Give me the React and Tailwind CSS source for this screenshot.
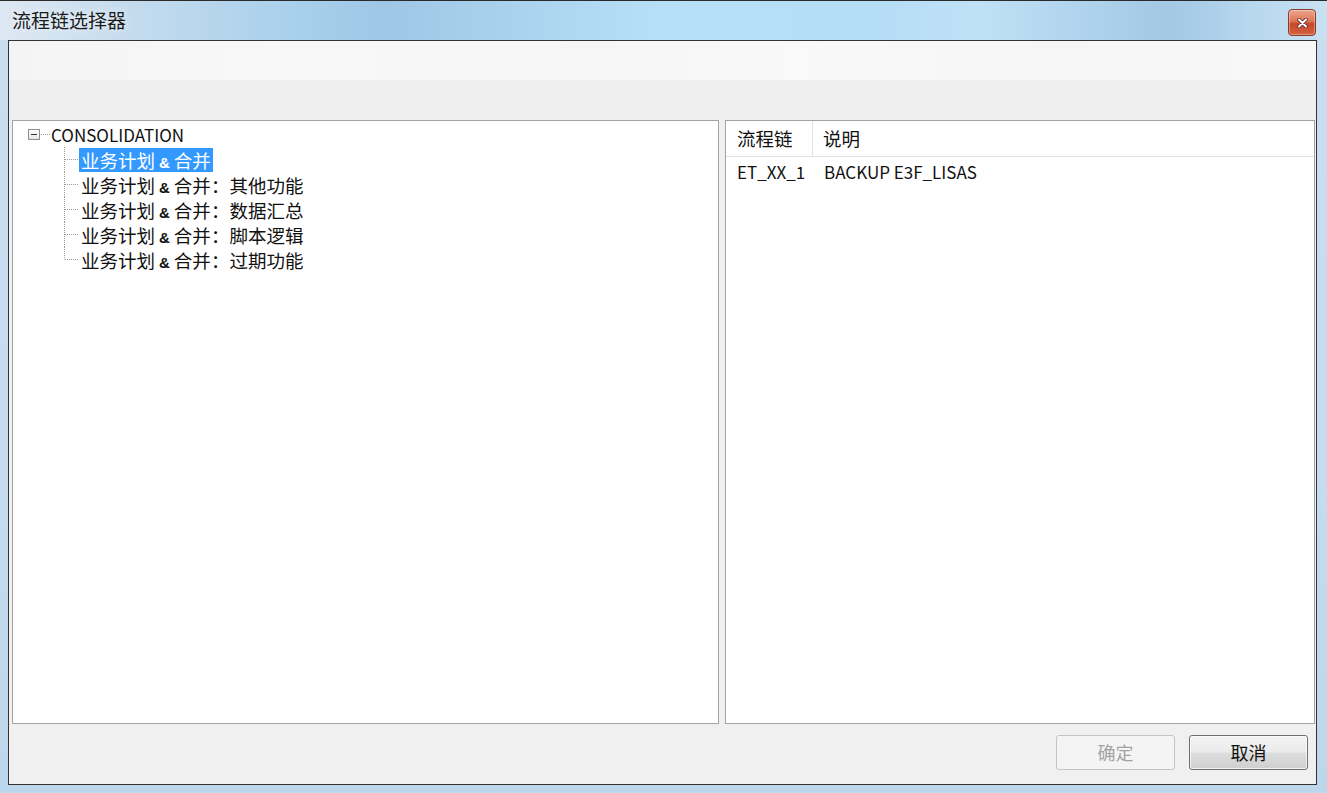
import React from "react";

const CJK = { fontFamily: '"Noto Sans CJK SC", "Noto Sans", sans-serif' };

function Connector({ last }) {
  return (
    <svg width="15" height="25" className="shrink-0 block" aria-hidden="true">
      <line x1="0.5" y1="0" x2="0.5" y2={last ? 12.5 : 25} stroke="#9a9a9a" strokeDasharray="1 1" />
      <line x1="1" y1="12.5" x2="15" y2="12.5" stroke="#9a9a9a" strokeDasharray="1 1" />
    </svg>
  );
}

function ItemText({ rest }) {
  return (
    <>
      业务计划<span className="text-[15px] font-semibold mx-[4px] font-['Liberation_Sans',sans-serif]">&amp;</span>合并{rest}
    </>
  );
}

const children = [
  { rest: "", selected: true },
  { rest: "：其他功能" },
  { rest: "：数据汇总" },
  { rest: "：脚本逻辑" },
  { rest: "：过期功能" },
];

export default function App() {
  return (
    <div
      className="w-[1327px] h-[793px] flex flex-col overflow-hidden border-t border-[#2b2b2b] bg-[linear-gradient(180deg,#c9deef_0%,#c6dcee_60%,#bcd6eb_100%)]"
      style={CJK}
    >
      {/* Title bar */}
      <div className="h-[39px] shrink-0 flex items-start justify-between pl-[12px] pr-[11px] bg-[linear-gradient(90deg,#dde8f2_0%,#c4dbee_10%,#a9d0ec_22%,#9ec7e6_29%,#a6cfec_36%,#b7dff7_50%,#b5ddf6_66%,#bfe1f6_74%,#a2c8e4_88%,#b6d7ee_94%,#c9e2f3_100%)]">
        <div className="pt-[6px] text-[19px] leading-[26px] text-[#1b1b1b] [text-shadow:0_0_6px_rgba(255,255,255,0.9)]">
          流程链选择器
        </div>
        <div className="mt-[8px] w-[28px] h-[27px] rounded-[4px] border border-[#8a3b28] bg-[linear-gradient(180deg,#eba68f_0%,#de7556_45%,#c9472b_55%,#d2623f_100%)] flex items-center justify-center shadow-[inset_0_0_0_1px_rgba(255,255,255,0.35)]">
          <svg width="11" height="10" viewBox="0 0 11 10" aria-hidden="true">
            <path d="M2 1.5 L9 8.5 M9 1.5 L2 8.5" stroke="#5a2a20" strokeWidth="3.6" strokeLinecap="round" />
            <path d="M2 1.5 L9 8.5 M9 1.5 L2 8.5" stroke="#ffffff" strokeWidth="2" strokeLinecap="round" />
          </svg>
        </div>
      </div>

      {/* Frame body */}
      <div className="flex-1 flex pl-[8px] pr-[10px] pb-[8px]">
        <div className="flex-1 flex flex-col border border-[#333333] bg-[#f0f0f0]">
          {/* toolbar */}
          <div className="h-[79px] shrink-0 flex flex-col">
            <div className="h-[39px] bg-[linear-gradient(90deg,#f4f4f4_0%,#f8f8f8_20%,#f6f6f6_45%,#f9f9f9_60%,#f6f6f6_80%,#f8f8f8_100%)]" />
            <div className="flex-1 bg-[#efefef]" />
          </div>

          {/* panels */}
          <div className="h-[604px] shrink-0 flex pl-[3px] pr-[1px] gap-[6px]">
            {/* tree */}
            <div className="w-[707px] h-full bg-white border border-[#a3a3a3] pt-[1px] text-[18.5px] text-[#111]">
              <div className="h-[25px] flex items-center pl-[15px]">
                <div className="w-[12px] h-[11px] border border-[#8f8f8f] bg-[linear-gradient(180deg,#ffffff_0%,#e6e6e6_100%)] flex items-center justify-center">
                  <div className="w-[6px] h-[1px] bg-[#333]" />
                </div>
                <svg width="11" height="3" className="block" aria-hidden="true">
                  <line x1="1" y1="1.5" x2="11" y2="1.5" stroke="#9a9a9a" strokeDasharray="1 1" />
                </svg>
                <span className="text-[17px] leading-[25px]">CONSOLIDATION</span>
              </div>
              {children.map((c, i) => (
                <div key={i} className="h-[25px] flex items-center pl-[51px]">
                  <Connector last={i === children.length - 1} />
                  <span
                    className={
                      "h-[24px] leading-[24px] px-[2px] whitespace-nowrap " +
                      (c.selected ? "bg-[#3399ff] text-white" : "")
                    }
                  >
                    <ItemText rest={c.rest} />
                  </span>
                </div>
              ))}
            </div>

            {/* list */}
            <div className="flex-1 h-full bg-white border border-[#a3a3a3] flex flex-col text-[#111]">
              <div className="h-[36px] flex border-b border-[#e3e3e3] text-[18.5px]">
                <div className="w-[87px] border-r border-[#e3e3e3] pl-[11px] flex items-center">流程链</div>
                <div className="flex-1 pl-[10px] flex items-center">说明</div>
              </div>
              <div className="h-[30px] flex items-center text-[17px]">
                <div className="w-[87px] pl-[11px]">ET_XX_1</div>
                <div className="pl-[11px]">BACKUP E3F_LISAS</div>
              </div>
            </div>
          </div>

          {/* buttons */}
          <div className="flex-1 flex justify-end items-start gap-[14px] pt-[11px] pr-[8px]">
            <button className="w-[119px] h-[35px] rounded-[3px] border border-[#c4c4c4] bg-[#f4f4f4] text-[18px] text-[#a3a3a3]">
              确定
            </button>
            <button className="w-[119px] h-[35px] rounded-[3px] border border-[#707070] bg-[linear-gradient(180deg,#f3f3f3_0%,#ebebeb_48%,#dddddd_52%,#cfcfcf_100%)] text-[18px] text-[#111] shadow-[inset_0_0_0_1px_rgba(255,255,255,0.7)]">
              取消
            </button>
          </div>
        </div>
      </div>
    </div>
  );
}
